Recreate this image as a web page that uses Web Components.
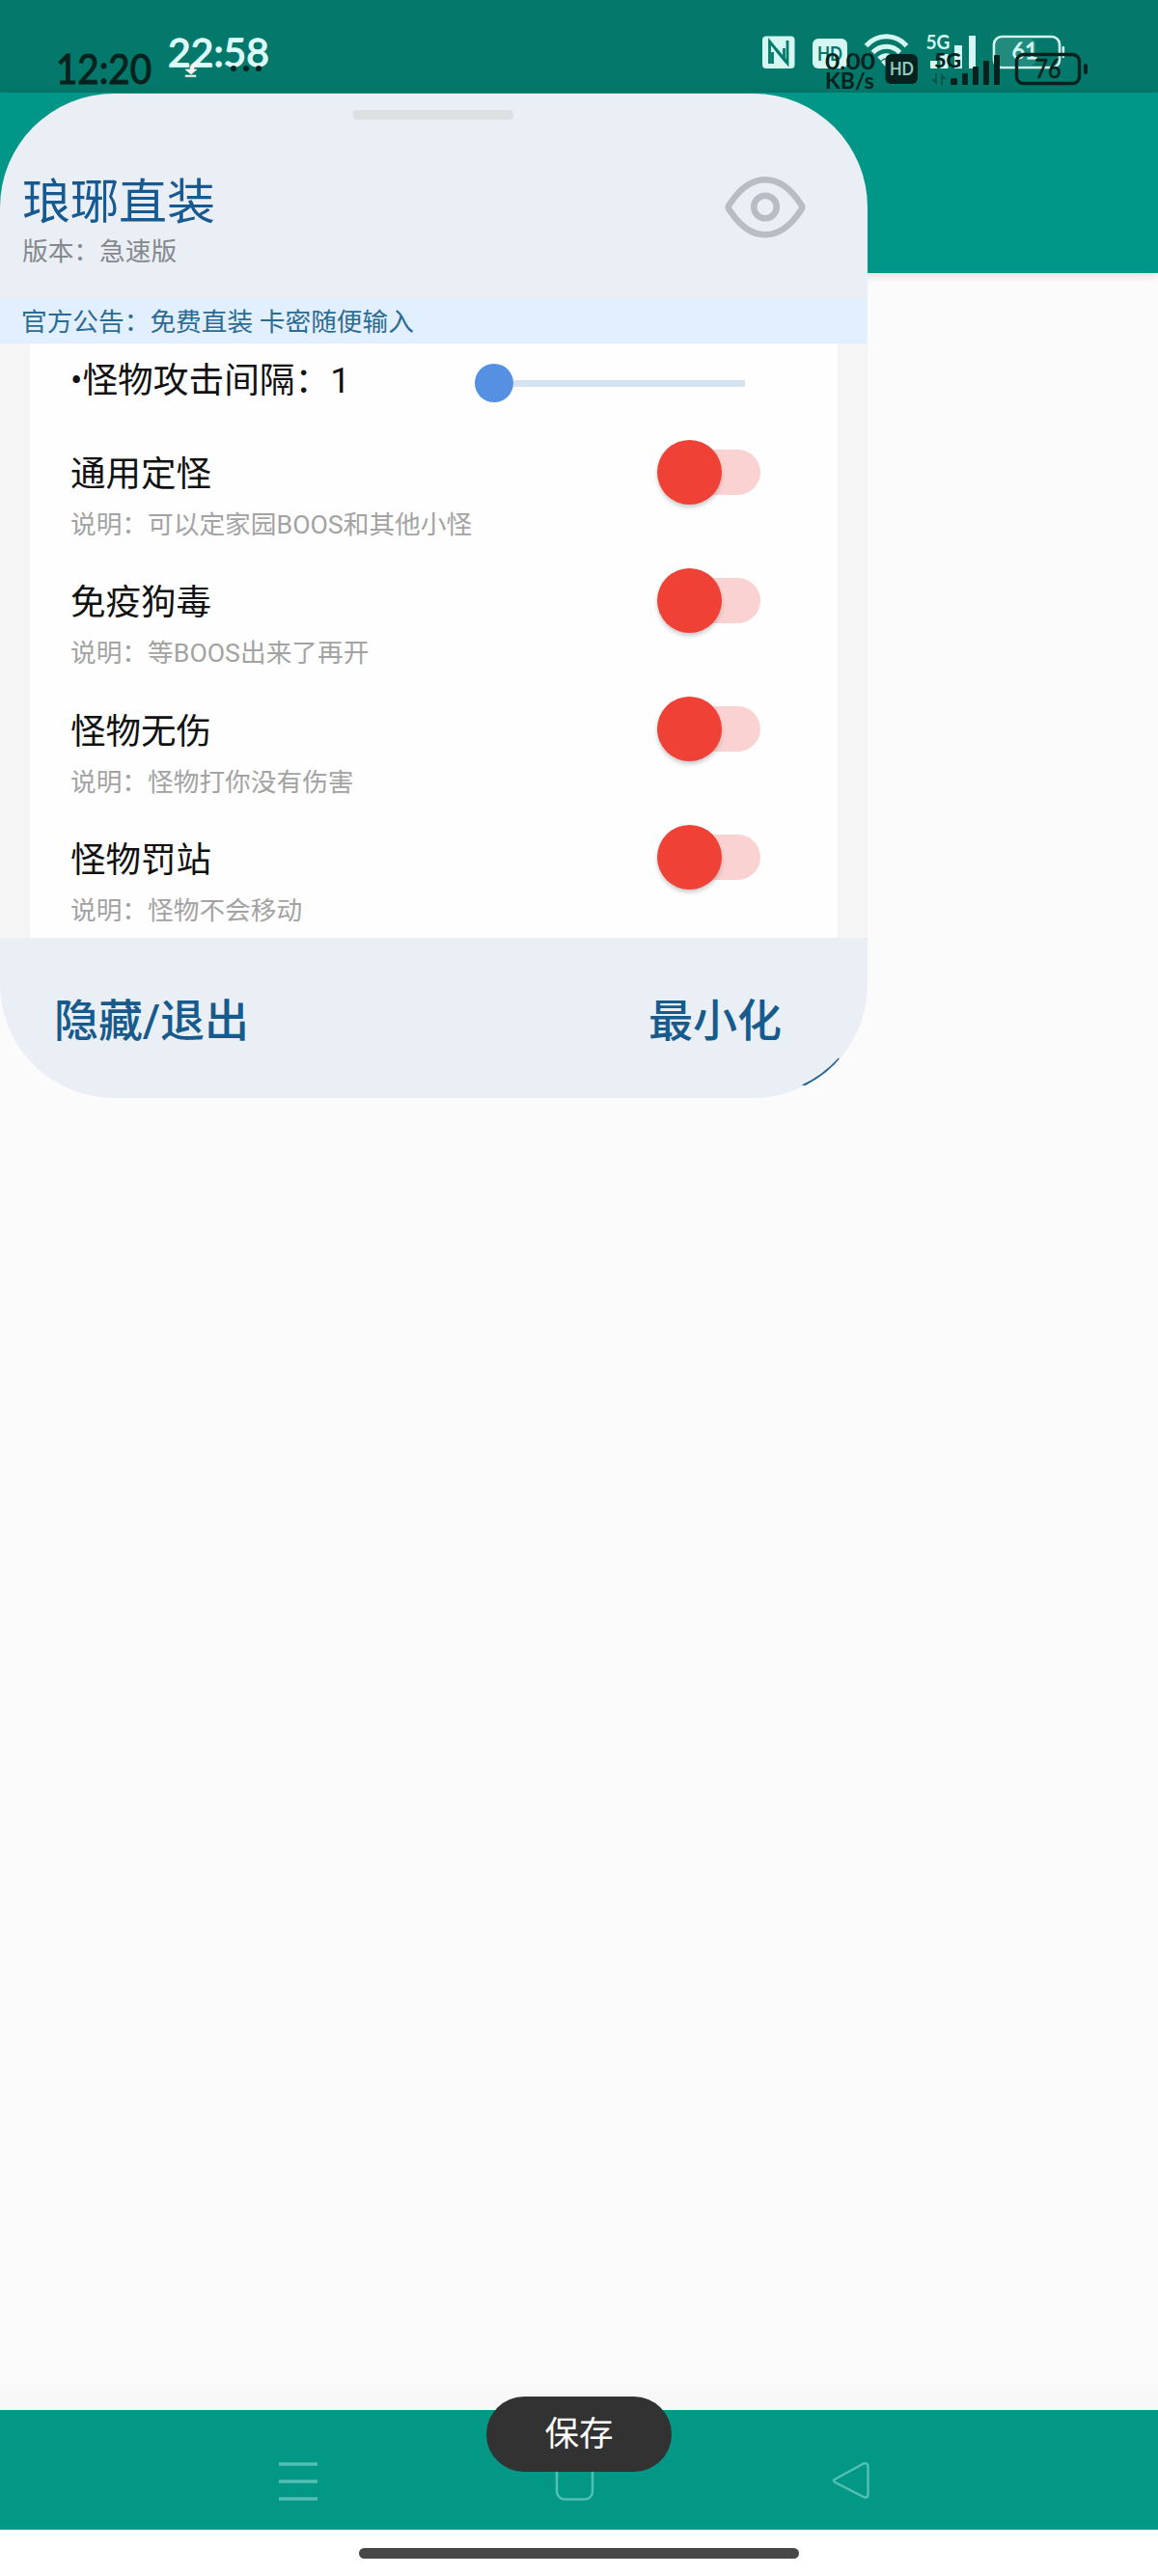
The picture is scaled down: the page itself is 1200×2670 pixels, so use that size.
<!DOCTYPE html>
<html lang="zh-CN">
<head>
<meta charset="utf-8">
<title>琅琊直装</title>
<style>
  html, body { margin: 0; padding: 0; }
  body {
    width: 1200px;
    height: 2670px;
    overflow: hidden;
    background: #fbfbfb;
    font-family: Roboto, "Noto Sans CJK SC", sans-serif;
  }
</style>
</head>
<body>
<phone-screen>
  <status-bar slot="status"></status-bar>
  <float-panel slot="overlay" heading="琅琊直装" version="版本：急速版">
    <span slot="notice">官方公告：免费直装 卡密随便输入</span>
    <slider-row label="•怪物攻击间隔：1"></slider-row>
    <switch-row label="通用定怪">说明：可以定家园BOOS和其他小怪</switch-row>
    <switch-row label="免疫狗毒">说明：等BOOS出来了再开</switch-row>
    <switch-row label="怪物无伤">说明：怪物打你没有伤害</switch-row>
    <switch-row label="怪物罚站">说明：怪物不会移动</switch-row>
    <span slot="left">隐藏/退出</span>
    <span slot="right">最小化</span>
  </float-panel>
  <nav-bar slot="nav"></nav-bar>
  <toast-message slot="toast">保存</toast-message>
</phone-screen>

<script>
function makeTemplate(html) {
    const template = document.createElement('template');
    template.innerHTML = html;
    return template;
}

class BaseElement extends HTMLElement {
    constructor() {
        super();
        this.attachShadow({ mode: 'open' });
        this.shadowRoot.appendChild(this.constructor.template.content.cloneNode(true));
    }

    setText(id, value) {
        this.shadowRoot.getElementById(id).textContent = value || '';
    }
}

/* Whole screen: status bar, app toolbar, empty page, nav bar */
class PhoneScreen extends BaseElement {
    static template = makeTemplate(`
    <style>
:host {
  display: flex;
  flex-direction: column;
  position: relative;
  width: 1200px;
  height: 2670px;
  overflow: hidden;
}
.toolbar {
  position: relative;
  flex: none;
  height: 187px;
  background: #009688;
  box-shadow: 0 2px 10px rgba(0,0,0,0.14);
}
.page {
  flex: 1;
  background: linear-gradient(#fbfbfb 98%, #f7f7f7);
}
/* The floating window sits on top of the app */
.overlay {
  position: absolute;
  left: 0;
  top: 97px;
}
.toast {
  position: absolute;
  left: 0;
  right: 0;
  top: 2484px;
  display: flex;
  justify-content: center;
}
    </style>
    <slot name="status"></slot>
    <div class="toolbar"></div>
    <div class="page"></div>
    <slot name="nav"></slot>
    <div class="overlay"><slot name="overlay"></slot></div>
    <div class="toast"><slot name="toast"></slot></div>
    `);
}

class StatusBar extends BaseElement {
    static template = makeTemplate(`
    <style>
:host {
  display: block;
  flex: none;
  height: 96px;
  background: #04796b;
}
svg { display: block; }
text { font-family: Lato, Roboto, sans-serif; }
.light { fill: #d5f7f2; }
.dark { fill: #06221f; }
    </style>
    <svg width="1200" height="96" viewBox="0 0 1200 96">
      <!-- clocks -->
      <text x="174" y="69" font-size="41" font-weight="400" fill="#dcfdfb" stroke="#dcfdfb" stroke-width="1.300" textLength="105" lengthAdjust="spacingAndGlyphs">22:58</text>
      <text x="58" y="87" font-size="42" font-weight="400" class="dark" stroke="#06221f" stroke-width="1.200" textLength="99" lengthAdjust="spacingAndGlyphs">12:20</text>
      <g class="dark">
        <circle cx="242" cy="71" r="3"/><circle cx="255" cy="71" r="3"/><circle cx="268" cy="71" r="3"/>
      </g>
      <path d="M206 64c-6 0-9 3-9 8h-5l6 5 6-5h-3c0-4 1-6 5-6zM192 78h11v1.600h-11z" fill="#fff0ec" stroke="#fff0ec" stroke-width=".6"/>

      <!-- nfc -->
      <rect x="790" y="37.500" width="33.500" height="33.500" rx="4" class="light"/>
      <path d="M797.500 66V43L812.500 61.500V50M800.500 66V54" fill="none" stroke="#04796b" stroke-width="2.800"/>
      <path d="M816 42V65.500L804 51" fill="none" stroke="#04796b" stroke-width="2.800"/>

      <!-- hd -->
      <rect x="842" y="40" width="36" height="31" rx="6" class="light"/>
      <text x="847" y="63" font-size="21" font-weight="700" fill="#04796b" textLength="26" lengthAdjust="spacingAndGlyphs">HD</text>

      <!-- wifi -->
      <g fill="none" stroke="#d5f7f2" stroke-width="5">
        <path d="M897.500 47.500C909 34.500 928 34.500 939.500 47.500"/>
        <path d="M904.500 54.500C912 46 925 46 932.500 54.500"/>
        <path d="M911 61C915.500 56.500 921.500 56.500 926 61"/>
      </g>
      <path d="M913 64Q918.500 59 924 64L918.500 70z" class="light"/>

      <!-- 5g signal -->
      <g class="light">
        <rect x="964" y="63" width="7" height="8"/>
        <rect x="974.500" y="56" width="8" height="15"/>
        <rect x="989" y="47" width="8" height="24"/>
        <rect x="1004" y="37" width="7" height="34"/>
        <text x="959.500" y="50.500" font-size="21" font-weight="700" textLength="25" lengthAdjust="spacingAndGlyphs">5G</text>
      </g>

      <!-- battery 61 -->
      <rect x="1032" y="40" width="41" height="28" rx="5" fill="#4fa79c" opacity=".4"/>
      <rect x="1030" y="38" width="68" height="32" rx="8" fill="none" stroke="#d5f7f2" stroke-width="2.600"/>
      <rect x="1100.500" y="48" width="2.600" height="12" rx="1" class="light"/>
      <text x="1048.500" y="61" font-size="24" font-weight="400" class="light" stroke="#d5f7f2" stroke-width=".8" textLength="27" lengthAdjust="spacingAndGlyphs">61</text>

      <!-- network speed -->
      <g class="dark">
        <text x="855" y="72" font-size="23.500" font-weight="700" textLength="52" lengthAdjust="spacingAndGlyphs">0.00</text>
        <text x="855" y="92" font-size="22.500" font-weight="700" textLength="51" lengthAdjust="spacingAndGlyphs">KB/s</text>
      </g>

      <rect x="917.500" y="56" width="33.500" height="31" rx="6" class="dark"/>
      <text x="922" y="78" font-size="18" font-weight="700" fill="#8fc9c1" textLength="25" lengthAdjust="spacingAndGlyphs">HD</text>

      <g class="dark">
        <text x="968" y="70" font-size="21" font-weight="900" textLength="28" lengthAdjust="spacingAndGlyphs">5G</text>
        <path d="M971 76v12l-6-6h4v-6zM975 88V76l6 6h-4v6z" opacity=".4"/>
        <rect x="985" y="81" width="7" height="7" rx="1.500"/>
        <rect x="997" y="76" width="6" height="12" rx="1"/>
        <rect x="1008" y="69" width="6" height="19" rx="1"/>
        <rect x="1019" y="63" width="6" height="25" rx="1"/>
        <rect x="1030" y="57" width="6" height="31" rx="1"/>
      </g>

      <!-- battery 76 -->
      <rect x="1053.500" y="56.500" width="65" height="30" rx="7" fill="none" stroke="#06221f" stroke-width="3.400"/>
      <rect x="1123" y="66" width="4" height="11" rx="2" class="dark"/>
      <text x="1072.500" y="80.500" font-size="26" class="dark" stroke="#06221f" stroke-width=".6" textLength="27" lengthAdjust="spacingAndGlyphs">76</text>
    </svg>
    `);
}

/* Floating menu window */
class FloatPanel extends BaseElement {
    static template = makeTemplate(`
    <style>
:host {
  display: flex;
  flex-direction: column;
  position: relative;
  width: 899px;
  height: 1041px;
  border-radius: 118px;
  overflow: hidden;
  background: #eaeef5;
}
.head {
  display: grid;
  grid-template-columns: 1fr 84px;
  grid-template-rows: 17px 10px 1fr;
  box-sizing: border-box;
  height: 213px;
  padding: 0 64px 0 23px;
}
.handle {
  grid-area: 2 / 1 / 3 / 3;
  width: 166px;
  margin-left: 343px;
  border-radius: 4px;
  background: #dde0e3;
}
/* Row 3 under the drag handle */
.titles {
  grid-area: 3 / 1;
  padding-top: 51px;
}
.title {
  font-size: 50px;
  line-height: 70px;
  color: #175a92;
}
.version {
  margin-top: -1px;
  font-size: 26.700px;
  line-height: 34px;
  color: #85888d;
}
.eye {
  grid-area: 3 / 2;
  display: block;
  margin-top: 59px;
}
.notice {
  height: 46px;
  padding-left: 22px;
  background: #e1effe;
  color: #2d6c92;
  font-size: 26.700px;
  line-height: 49px;
}
.body {
  display: flex;
  flex: 1;
  background: #f5f5f5;
}
.list {
  flex: 1;
  margin: 0 31px;
  overflow: hidden;
  background: #fefefe;
}
.foot {
  display: flex;
  justify-content: space-between;
  box-sizing: border-box;
  height: 166px;
  padding: 52px 89px 0 56px;
  color: #175a8c;
  font-size: 46px;
  font-weight: 500;
  line-height: 68px;
}
/* Edge of the resize grip showing at the corner */
.corner {
  position: absolute;
  left: 830px;
  top: 998px;
}
    </style>
    <div class="head">
      <div class="handle"></div>
      <div class="titles">
        <div class="title" id="title"></div>
        <div class="version" id="version"></div>
      </div>
      <svg class="eye" width="84" height="64" viewBox="0 0 84 64" fill="none" stroke="#b8bcc4" stroke-width="6.500" stroke-linejoin="round">
        <path d="M4.500 34C3.500 32.500 3.500 31 4.500 29.500C27-5.500 57-5.500 79.500 29.500C80.500 31 80.500 32.500 79.500 34C57 69 27 69 4.500 34Z"/>
        <circle cx="42" cy="31.500" r="11.800"/>
      </svg>
    </div>
    <div class="notice"><slot name="notice"></slot></div>
    <div class="body"><div class="list"><slot></slot></div></div>
    <div class="foot"><slot name="left"></slot><slot name="right"></slot></div>
    <svg class="corner" width="42" height="32" viewBox="0 0 42 32">
      <path d="M1 29.500Q22 20 39 1.500L42 6L10 32Z" fill="#1f6090"/>
    </svg>
    `);

    connectedCallback() {
        this.setText('title', this.getAttribute('heading'));
        this.setText('version', this.getAttribute('version'));
    }
}

class SliderRow extends BaseElement {
    static template = makeTemplate(`
    <style>
:host {
  display: flex;
  height: 82px;
  padding: 0 96px 0 42px;
  color: #111;
}
.label {
  flex: 1;
  font-size: 36.700px;
  line-height: 77px;
}
.slider {
  display: flex;
  align-items: center;
  width: 280px;
  height: 82px;
}
.thumb {
  width: 40px;
  height: 40px;
  border-radius: 50%;
  background: #5590e2;
}
.track {
  flex: 1;
  height: 7px;
  background: #d5e3f0;
}
    </style>
    <div class="label" id="label"></div>
    <div class="slider"><div class="thumb"></div><div class="track"></div></div>
    `);

    connectedCallback() {
        this.setText('label', this.getAttribute('label'));
    }
}

class SwitchRow extends BaseElement {
    static template = makeTemplate(`
    <style>
:host {
  display: flex;
  justify-content: space-between;
  box-sizing: border-box;
  height: 133.300px;
  padding: 22px 80px 0 42px;
}
.label {
  padding-top: 2px;
  font-size: 36.500px;
  line-height: 60px;
  color: #111;
}
.desc {
  font-size: 26.700px;
  line-height: 44px;
  color: #a3a3a3;
}
.switch {
  display: flex;
  align-items: center;
  width: 107px;
  height: 58px;
}
.track {
  flex: 1;
  height: 47px;
  margin-left: -44px;
  border-radius: 0 24px 24px 0;
  background: #fad2d2;
}
.thumb {
  z-index: 1;
  width: 67px;
  height: 67px;
  border-radius: 50%;
  background: #ef4135;
  box-shadow: 0 3px 4px rgba(0,0,0,0.2);
}
    </style>
    <div>
      <div class="label" id="label"></div>
      <div class="desc"><slot></slot></div>
    </div>
    <div class="switch"><div class="thumb"></div><div class="track"></div></div>
    `);

    connectedCallback() {
        this.setText('label', this.getAttribute('label'));
    }
}

class NavBar extends BaseElement {
    static template = makeTemplate(`
    <style>
:host {
  display: block;
  flex: none;
  height: 172px;
  background: #fff;
}
.keys {
  display: flex;
  align-items: center;
  justify-content: space-between;
  box-sizing: border-box;
  height: 124px;
  padding: 23px 295px 0 287px;
  background: #039786;
}
.gesture {
  width: 456px;
  height: 11px;
  margin: 19px auto 0;
  border-radius: 6px;
  background: #474747;
}
svg { display: block; fill: none; stroke: #52bfb2; stroke-width: 2.500; }
    </style>
    <div class="keys">
      <svg width="44" height="44" viewBox="0 0 44 44" style="stroke-width:3.600"><path d="M2 4h40M2 22h40M2 40h40"/></svg>
      <svg width="44" height="44" viewBox="0 0 44 44"><rect x="3" y="3" width="37" height="37.500" rx="8"/></svg>
      <svg width="44" height="44" viewBox="0 0 44 44"><path d="M4.500 19.500L34 3.500Q38.500 2 38.500 7V35Q38.500 40 34 38L4.500 23Q1.500 21.200 4.500 19.500Z"/></svg>
    </div>
    <div class="gesture"></div>
    `);
}

class ToastMessage extends BaseElement {
    static template = makeTemplate(`
    <style>
:host {
  display: block;
  width: 192px;
  height: 78px;
  border-radius: 39px;
  background: #323232;
  color: #fff;
  font-size: 35.500px;
  line-height: 79px;
  text-align: center;
}
    </style>
    <slot></slot>
    `);
}

window.customElements.define('phone-screen', PhoneScreen);
window.customElements.define('status-bar', StatusBar);
window.customElements.define('float-panel', FloatPanel);
window.customElements.define('slider-row', SliderRow);
window.customElements.define('switch-row', SwitchRow);
window.customElements.define('nav-bar', NavBar);
window.customElements.define('toast-message', ToastMessage);
</script>
</body>
</html>
